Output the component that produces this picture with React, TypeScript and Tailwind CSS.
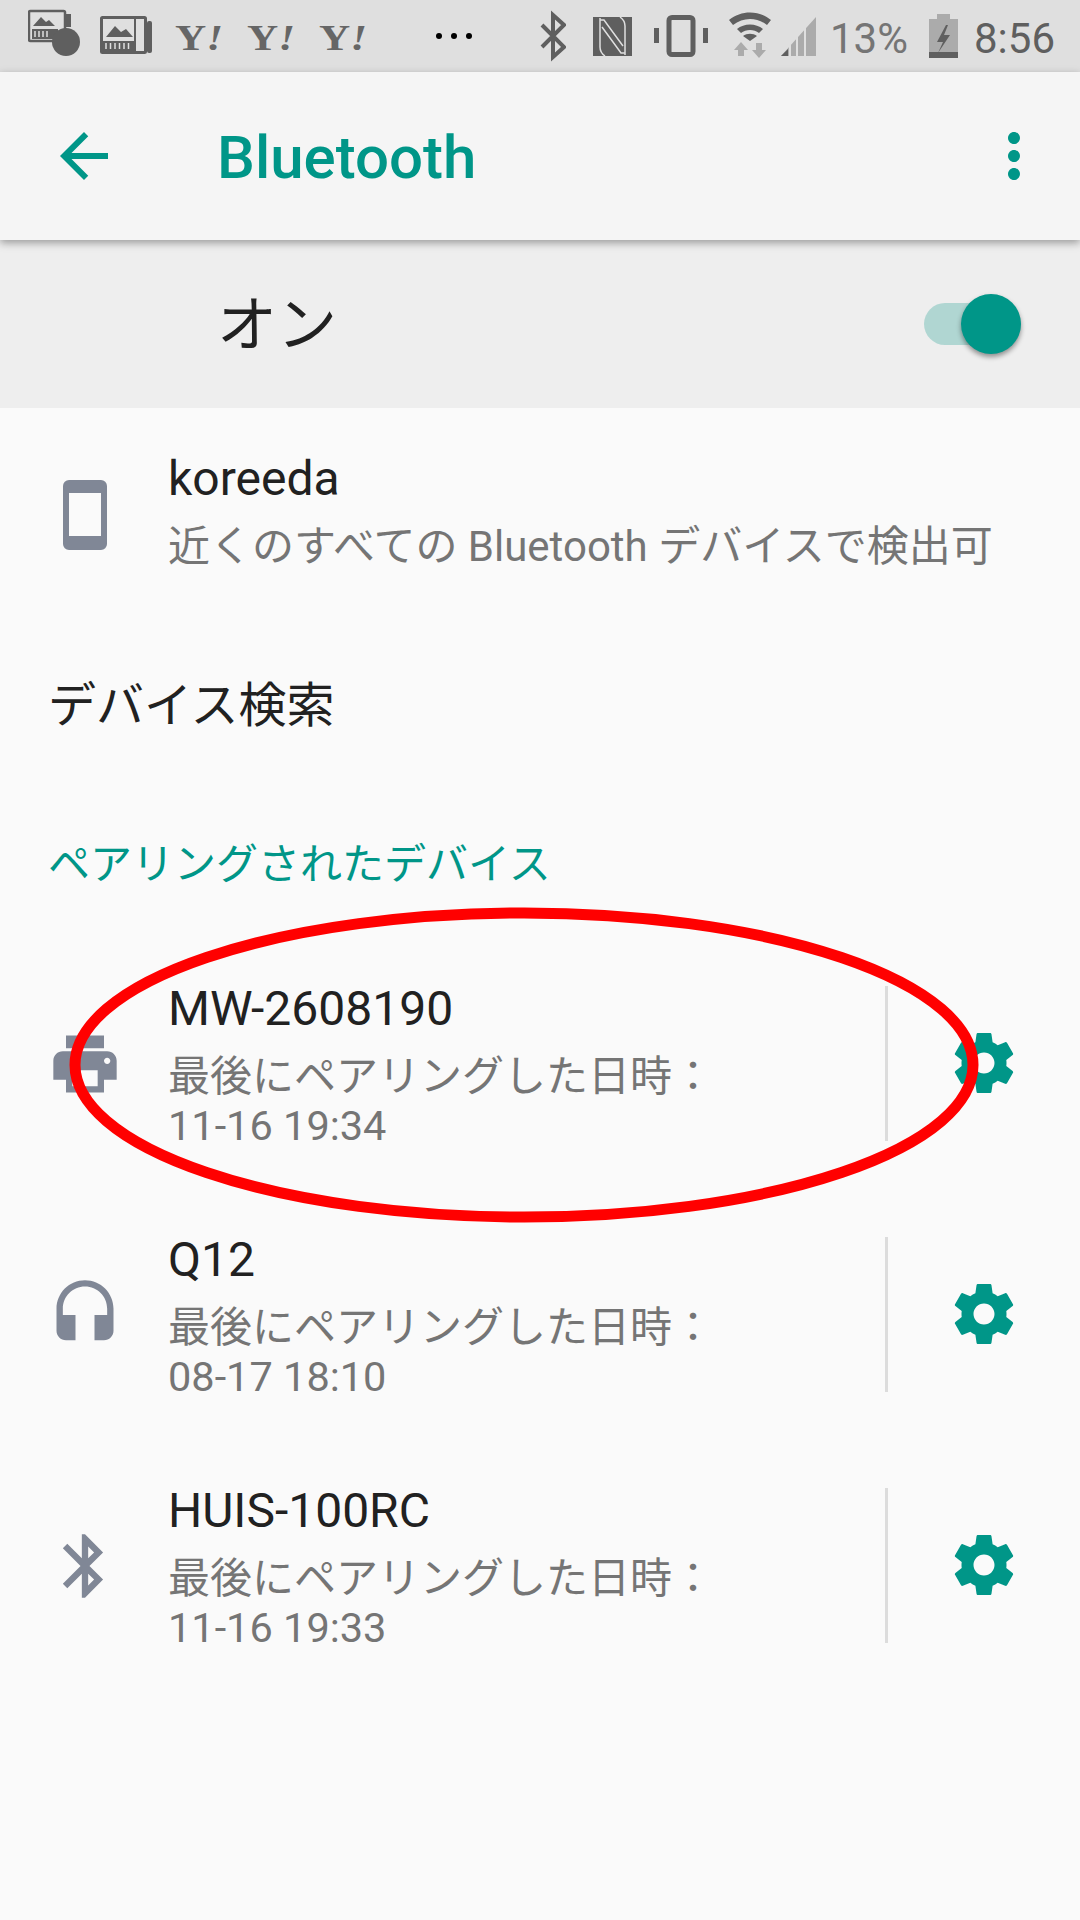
const TEAL = "#009688";
const ICON = "#808796";
const DARK = "#5f5f5f";
const LIGHT = "#ababab";

const fontStack = "font-['Roboto','Noto_Sans_CJK_JP',sans-serif]";

const PATHS = {
  back: "M20 11H7.83l5.59-5.59L12 4l-8 8 8 8 1.41-1.41L7.83 13H20v-2z",
  more: "M12 8c1.1 0 2-.9 2-2s-.9-2-2-2-2 .9-2 2 .9 2 2 2zm0 2c-1.1 0-2 .9-2 2s.9 2 2 2 2-.9 2-2-.9-2-2-2zm0 6c-1.1 0-2 .9-2 2s.9 2 2 2 2-.9 2-2-.9-2-2-2z",
  print:
    "M19 8H5c-1.66 0-3 1.34-3 3v6h4v4h12v-4h4v-6c0-1.66-1.34-3-3-3zm-3 11H8v-5h8v5zm3-7c-.55 0-1-.45-1-1s.45-1 1-1 1 .45 1 1-.45 1-1 1zm-1-9H6v4h12V3z",
  headset:
    "M12 1c-4.97 0-9 4.03-9 9v7c0 1.66 1.34 3 3 3h3v-8H5v-2c0-3.87 3.13-7 7-7s7 3.13 7 7v2h-4v8h3c1.66 0 3-1.34 3-3v-7c0-4.97-4.03-9-9-9z",
  bluetooth:
    "M17.71 7.71L12 2h-1v7.59L6.41 5 5 6.41 10.59 12 5 17.59 6.41 19 11 14.41V22h1l5.71-5.71-4.3-4.29 4.3-4.29zM13 5.83l1.88 1.88L13 9.59V5.83zm1.88 10.46L13 18.17v-3.76l1.88 1.88z",
  settings:
    "M19.43 12.98c.04-.32.07-.64.07-.98s-.03-.66-.07-.98l2.11-1.65c.19-.15.24-.42.12-.64l-2-3.46c-.12-.22-.39-.3-.61-.22l-2.49 1c-.52-.4-1.08-.73-1.69-.98l-.38-2.65C14.46 2.18 14.25 2 14 2h-4c-.25 0-.46.18-.49.42l-.38 2.65c-.61.25-1.17.59-1.69.98l-2.49-1c-.23-.09-.49 0-.61.22l-2 3.46c-.13.22-.07.49.12.64l2.11 1.65c-.04.32-.07.65-.07.98s.03.66.07.98l-2.11 1.65c-.19.15-.24.42-.12.64l2 3.46c.12.22.39.3.61.22l2.49-1c.52.4 1.08.73 1.69.98l.38 2.65c.03.24.24.42.49.42h4c.25 0 .46-.18.49-.42l.38-2.65c.61-.25 1.17-.59 1.69-.98l2.49 1c.23.09.49 0 .61-.22l2-3.46c.12-.22.07-.49-.12-.64l-2.11-1.65zM12 15.5c-1.93 0-3.5-1.57-3.5-3.5s1.57-3.5 3.5-3.5 3.5 1.57 3.5 3.5-1.57 3.5-3.5 3.5z",
};

function Mat({ d, size, color }: { d: string; size: number; color: string }) {
  return (
    <svg width={size} height={size} viewBox="0 0 24 24" fill={color} className="shrink-0">
      <path d={d} />
    </svg>
  );
}

// status bar icons share the bar's 72px height, so y values are screen pixels
function NewsBadge() {
  return (
    <svg width="52" height="72" viewBox="0 0 52 72" className="shrink-0">
      <rect x="1" y="11" width="36" height="30" rx="1.5" fill="none" stroke={DARK} strokeWidth="2.5" />
      <path d="M5 26l8-9 5 5 3-2 6 6z" fill={DARK} />
      <path d="M4 29h26v10H4z" fill={DARK} />
      <path d="M7 31v6M11 31v6M15 31v6M19 31v6" stroke="#dfdfdf" strokeWidth="1.5" />
      <rect x="38" y="14" width="5" height="13" fill={DARK} />
      <circle cx="38" cy="42" r="14" fill={DARK} />
    </svg>
  );
}

function NewsPaper() {
  return (
    <svg width="52" height="72" viewBox="0 0 52 72" className="shrink-0">
      <rect x="1.5" y="17.5" width="44" height="35" rx="1" fill="none" stroke={DARK} strokeWidth="3" />
      <rect x="47" y="21" width="5" height="32" rx="2" fill={DARK} />
      <path d="M6 37l9-11 6 6 5-3 7 8z" fill={DARK} />
      <path d="M3 41h31v10H3z" fill={DARK} />
      <path d="M34 17h2v35h-2z" fill={DARK} />
      <path d="M6 43v6M10.5 43v6M15 43v6M19.5 43v6M24 43v6M28.5 43v6" stroke="#dfdfdf" strokeWidth="1.5" />
    </svg>
  );
}

function Yahoo() {
  return (
    <span className="w-[47px] mt-[4px] shrink-0 font-['Liberation_Serif',serif] font-bold text-[36px] leading-none text-[#666666] whitespace-nowrap scale-x-[1.2] origin-left">
      Y<span className="italic">!</span>
    </span>
  );
}

function StatusIcons() {
  return (
    <>
      <svg width="26" height="72" viewBox="0 0 26 72" className="shrink-0 ml-[68px]">
        <path d="M2 25l22 22-11 10V15l11 10L2 47" fill="none" stroke={DARK} strokeWidth="4" />
      </svg>
      <svg width="39" height="72" viewBox="0 0 39 72" className="shrink-0 ml-[27px]">
        <rect x="0" y="17" width="39" height="39" fill={DARK} />
        <path
          d="M12 56c-3-2-5-5-5-9V18M7 20h4l19 26M27 17c3 2 5 5 5 9v29M32 53h-4L9 27"
          fill="none"
          stroke="#dfdfdf"
          strokeWidth="1.5"
        />
      </svg>
      <svg width="54" height="72" viewBox="0 0 54 72" className="shrink-0 ml-[22px]">
        <rect x="0" y="28" width="5" height="15" fill={DARK} />
        <rect x="49" y="28" width="5" height="15" fill={DARK} />
        <rect x="15" y="17.5" width="24" height="37" rx="3" fill="none" stroke={DARK} strokeWidth="5" />
      </svg>
      <svg width="42" height="72" viewBox="0 0 42 72" className="shrink-0 ml-[21px]">
        <path d="M0 20c12-10 30-10 42 0l-4 5c-10-8-24-8-34 0z" fill={DARK} />
        <path d="M8 29c7-6 19-6 26 0l-4 4c-5-4-13-4-18 0z" fill={DARK} />
        <path d="M14 36c4-3 10-3 14 0l-7 5z" fill={DARK} />
        <path d="M12 42l-7 8h4v6h6v-6h4zM30 58l7-8h-4v-7h-6v7h-4z" fill={LIGHT} />
      </svg>
      <svg width="35" height="72" viewBox="0 0 35 72" className="shrink-0 ml-[10px]">
        <path d="M0 56l35-39v39z" fill={LIGHT} />
        <path d="M0 56l7-7v7z" fill={DARK} />
        <path d="M9 37v19M16 30v26M24 21v35" stroke="#dfdfdf" strokeWidth="2" />
      </svg>
      <span className="w-[78px] ml-[14px] mt-[5px] shrink-0 text-[42px] leading-none text-[#757575] whitespace-nowrap">13%</span>
      <svg width="29" height="72" viewBox="0 0 29 72" className="shrink-0 ml-[21px]">
        <path d="M8 14h13v5h8v39H0V19h8z" fill={LIGHT} />
        <rect x="0" y="52" width="29" height="6" fill={DARK} />
        <path d="M17 25l-9 17h6l-5 11 12-18h-6l4-10z" fill={DARK} />
      </svg>
      <span className="ml-[16px] mt-[5px] shrink-0 text-[42px] leading-none text-[#5f5f5f] whitespace-nowrap">8:56</span>
    </>
  );
}

function StatusBar() {
  return (
    <div className="h-[72px] bg-[#dfdfdf] flex items-center pl-[28px]">
      <NewsBadge />
      <div className="ml-[20px]">
        <NewsPaper />
      </div>
      <div className="ml-[23px] flex">
        <Yahoo />
      </div>
      <div className="ml-[25px] flex">
        <Yahoo />
      </div>
      <div className="ml-[25px] flex">
        <Yahoo />
      </div>
      <div className="ml-[70px] w-[36px] flex justify-between">
        <span className="w-[6px] h-[6px] rounded-full bg-black" />
        <span className="w-[6px] h-[6px] rounded-full bg-black" />
        <span className="w-[6px] h-[6px] rounded-full bg-black" />
      </div>
      <StatusIcons />
    </div>
  );
}

function Toolbar() {
  return (
    <div className="relative z-10 h-[168px] bg-[#f5f5f5] flex items-center shadow-[0_3px_8px_rgba(0,0,0,0.35)]">
      <div className="ml-[48px]">
        <Mat d={PATHS.back} size={72} color={TEAL} />
      </div>
      <span className="ml-[97px] mt-[4px] text-[60px] leading-none font-medium text-[#009688]">Bluetooth</span>
      <div className="ml-auto mr-[30px]">
        <Mat d={PATHS.more} size={72} color={TEAL} />
      </div>
    </div>
  );
}

function MasterSwitch() {
  return (
    <div className="h-[168px] bg-[#eeeeee] flex items-center justify-between pl-[217px] pr-[59px]">
      <span className="mt-[4px] text-[60px] leading-none text-[#212121]">オン</span>
      <div className="relative w-[97px] h-[42px] rounded-full bg-[#b0d6d2]">
        <div className="absolute right-0 top-[-9px] w-[60px] h-[60px] rounded-full bg-[#009688] shadow-[0_3px_5px_rgba(0,0,0,0.4)]" />
      </div>
    </div>
  );
}

const DEVICES = [
  { name: "MW-2608190", date: "11-16 19:34", icon: PATHS.print },
  { name: "Q12", date: "08-17 18:10", icon: PATHS.headset },
  { name: "HUIS-100RC", date: "11-16 19:33", icon: PATHS.bluetooth },
];

function DeviceRow({ name, date, icon }: { name: string; date: string; icon: string }) {
  return (
    <div className="h-[251px] flex items-center">
      <div className="w-[168px] shrink-0 flex justify-center pl-[2px]">
        <Mat d={icon} size={76} color={ICON} />
      </div>
      <div className="flex-1 min-w-0 h-[176px] pt-[3px]">
        <div className="text-[48px] leading-[60px] text-[#212121]">{name}</div>
        <div className="text-[42px] leading-[60px] mt-[8px] text-[#757575] whitespace-nowrap">最後にペアリングした日時：</div>
        <div className="text-[41.5px] leading-[50px] -mt-[6px] text-[#757575]">{date}</div>
      </div>
      <div className="w-[3px] h-[155px] bg-[#dcdcdc] shrink-0" />
      <div className="w-[192px] shrink-0 flex justify-center -mt-[2px]">
        <Mat d={PATHS.settings} size={72} color={TEAL} />
      </div>
    </div>
  );
}

export default function App() {
  return (
    <div className={`relative w-[1080px] h-[1920px] overflow-hidden bg-[#fafafa] ${fontStack}`}>
      <StatusBar />
      <Toolbar />
      <MasterSwitch />

      <div className="h-[210px] flex items-center">
        <div className="w-[168px] shrink-0 flex justify-center pl-[2px]">
          <svg width="44" height="70" viewBox="0 0 44 70" className="shrink-0 mt-[4px]">
            <path
              fillRule="evenodd"
              d="M6 0h32a6 6 0 0 1 6 6v58a6 6 0 0 1-6 6H6a6 6 0 0 1-6-6V6a6 6 0 0 1 6-6zM6 13v43h32V13z"
              fill={ICON}
            />
          </svg>
        </div>
        <div>
          <div className="text-[48px] leading-[60px] text-[#212121]">koreeda</div>
          <div className="text-[42px] leading-[60px] mt-[8px] text-[#757575] whitespace-nowrap">
            近くのすべての Bluetooth デバイスで検出可
          </div>
        </div>
      </div>

      <div className="h-[172px] flex items-center pl-[48px] pt-[4px] text-[48px] text-[#212121]">デバイス検索</div>

      <div className="h-[148px] flex items-center pl-[48px] text-[42px] text-[#009688]">ペアリングされたデバイス</div>

      {DEVICES.map((d) => (
        <DeviceRow key={d.name} {...d} />
      ))}

      {/* red marker someone drew over the screenshot */}
      <svg className="absolute left-0 top-0 pointer-events-none" width="1080" height="1920" viewBox="0 0 1080 1920">
        <ellipse cx="524" cy="1065" rx="449" ry="152" fill="none" stroke="#ff0000" strokeWidth="11" />
      </svg>
    </div>
  );
}
